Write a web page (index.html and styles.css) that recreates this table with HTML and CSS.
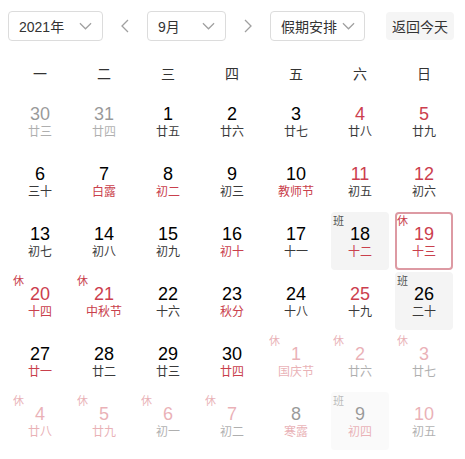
FILE: index.html
```html
<!DOCTYPE html>
<html lang="zh">
<head>
<meta charset="utf-8">
<link rel="stylesheet" href="styles.css">
</head>
<body>
<div class="cal">
  <div class="toolbar">
    <div class="select sel-year"><span>2021年</span><svg class="chev" viewBox="0 0 14 8" width="13" height="8"><path d="M1 1l6 6 6-6" fill="none" stroke="#a0a0a0" stroke-width="1.3"/></svg></div>
    <div class="arrow"><svg viewBox="0 0 8 14" width="8" height="14"><path d="M7 1L1 7l6 6" fill="none" stroke="#a0a0a0" stroke-width="1.3"/></svg></div>
    <div class="select sel-month"><span>9月</span><svg class="chev" viewBox="0 0 14 8" width="13" height="8"><path d="M1 1l6 6 6-6" fill="none" stroke="#a0a0a0" stroke-width="1.3"/></svg></div>
    <div class="arrow"><svg viewBox="0 0 8 14" width="8" height="14"><path d="M1 1l6 6-6 6" fill="none" stroke="#a0a0a0" stroke-width="1.3"/></svg></div>
    <div class="select sel-hol"><span>假期安排</span><svg class="chev" viewBox="0 0 14 8" width="13" height="8"><path d="M1 1l6 6 6-6" fill="none" stroke="#a0a0a0" stroke-width="1.3"/></svg></div>
    <div class="today-btn">返回今天</div>
  </div>
  <div class="weekdays">
    <div>一</div><div>二</div><div>三</div><div>四</div><div>五</div><div>六</div><div>日</div>
  </div>
  <div class="grid">
    <div class="cell other"><div class="num">30</div><div class="lunar">廿三</div></div>
    <div class="cell other"><div class="num">31</div><div class="lunar">廿四</div></div>
    <div class="cell"><div class="num">1</div><div class="lunar">廿五</div></div>
    <div class="cell"><div class="num">2</div><div class="lunar">廿六</div></div>
    <div class="cell"><div class="num">3</div><div class="lunar">廿七</div></div>
    <div class="cell"><div class="num red">4</div><div class="lunar">廿八</div></div>
    <div class="cell"><div class="num red">5</div><div class="lunar">廿九</div></div>

    <div class="cell"><div class="num">6</div><div class="lunar">三十</div></div>
    <div class="cell"><div class="num">7</div><div class="lunar red">白露</div></div>
    <div class="cell"><div class="num">8</div><div class="lunar red">初二</div></div>
    <div class="cell"><div class="num">9</div><div class="lunar">初三</div></div>
    <div class="cell"><div class="num">10</div><div class="lunar red">教师节</div></div>
    <div class="cell"><div class="num red">11</div><div class="lunar">初五</div></div>
    <div class="cell"><div class="num red">12</div><div class="lunar">初六</div></div>

    <div class="cell"><div class="num">13</div><div class="lunar">初七</div></div>
    <div class="cell"><div class="num">14</div><div class="lunar">初八</div></div>
    <div class="cell"><div class="num">15</div><div class="lunar">初九</div></div>
    <div class="cell"><div class="num">16</div><div class="lunar red">初十</div></div>
    <div class="cell"><div class="num">17</div><div class="lunar">十一</div></div>
    <div class="cell work"><span class="tag">班</span><div class="num">18</div><div class="lunar red">十二</div></div>
    <div class="cell selected"><span class="tag rest">休</span><div class="num red">19</div><div class="lunar red">十三</div></div>

    <div class="cell"><span class="tag rest">休</span><div class="num red">20</div><div class="lunar red">十四</div></div>
    <div class="cell"><span class="tag rest">休</span><div class="num red">21</div><div class="lunar red">中秋节</div></div>
    <div class="cell"><div class="num">22</div><div class="lunar">十六</div></div>
    <div class="cell"><div class="num">23</div><div class="lunar red">秋分</div></div>
    <div class="cell"><div class="num">24</div><div class="lunar">十八</div></div>
    <div class="cell"><div class="num red">25</div><div class="lunar">十九</div></div>
    <div class="cell work"><span class="tag">班</span><div class="num">26</div><div class="lunar">二十</div></div>

    <div class="cell"><div class="num">27</div><div class="lunar red">廿一</div></div>
    <div class="cell"><div class="num">28</div><div class="lunar">廿二</div></div>
    <div class="cell"><div class="num">29</div><div class="lunar">廿三</div></div>
    <div class="cell"><div class="num">30</div><div class="lunar red">廿四</div></div>
    <div class="cell other"><span class="tag rest">休</span><div class="num red">1</div><div class="lunar red">国庆节</div></div>
    <div class="cell other"><span class="tag rest">休</span><div class="num red">2</div><div class="lunar">廿六</div></div>
    <div class="cell other"><span class="tag rest">休</span><div class="num red">3</div><div class="lunar">廿七</div></div>

    <div class="cell other"><span class="tag rest">休</span><div class="num red">4</div><div class="lunar red">廿八</div></div>
    <div class="cell other"><span class="tag rest">休</span><div class="num red">5</div><div class="lunar red">廿九</div></div>
    <div class="cell other"><span class="tag rest">休</span><div class="num red">6</div><div class="lunar">初一</div></div>
    <div class="cell other"><span class="tag rest">休</span><div class="num red">7</div><div class="lunar">初二</div></div>
    <div class="cell other"><div class="num">8</div><div class="lunar red">寒露</div></div>
    <div class="cell other work"><span class="tag">班</span><div class="num">9</div><div class="lunar red">初四</div></div>
    <div class="cell other"><div class="num red">10</div><div class="lunar">初五</div></div>
  </div>
</div>
</body>
</html>
```
FILE: styles.css
```css
* { box-sizing: border-box; }
html, body { margin: 0; padding: 0; background: #fff; }
body {
  font-family: "Liberation Sans", "Noto Sans CJK SC", sans-serif;
  color: #333;
}
.cal { padding: 11px 8px 0 8px; width: 465px; }
.toolbar {
  display: flex;
  align-items: center;
  height: 30px;
}
.select {
  height: 30px;
  border: 1px solid #dcdcdc;
  border-radius: 4px;
  display: flex;
  align-items: center;
  justify-content: space-between;
  padding: 0 10px 0 10px;
  font-size: 14px;
  color: #333;
}
.sel-year { width: 95px; }
.sel-month { width: 79px; }
.sel-hol { width: 95px; padding-right: 9px; }
.chev { display: block; }
.arrow {
  width: 44px;
  display: flex;
  justify-content: center;
  align-items: center;
}
.today-btn {
  margin-left: 21px;
  width: 68px;
  height: 28px;
  background: #f5f5f5;
  border-radius: 4px;
  font-size: 14px;
  color: #333;
  display: flex;
  align-items: center;
  justify-content: center;
}
.weekdays {
  display: grid;
  grid-template-columns: repeat(7, 64px);
  height: 50px;
  align-items: center;
  padding-top: 14px;
  font-size: 14px;
  color: #333;
  text-align: center;
}
.grid {
  display: grid;
  grid-template-columns: repeat(7, 64px);
  grid-auto-rows: 60px;
}
.cell {
  position: relative;
  margin: 1px 3px;
  border-radius: 4px;
  text-align: center;
  padding-top: 12px;
}
.num {
  font-size: 18px;
  line-height: 20px;
  color: #000;
}
.lunar {
  font-size: 12px;
  line-height: 16px;
  color: #3a3a3a;
}
.red { color: #c9404c; }
.lunar.red { color: #c9404c; }
.num.red { color: #cc3e4e; }
.other { opacity: 0.4; }
.work { background: #f4f4f4; }
.selected { border: 2px solid #dd9aa3; padding-top: 10px; }
.tag {
  position: absolute;
  left: 2px;
  top: 2px;
  font-size: 11px;
  line-height: 14px;
  color: #555;
}
.tag.rest { color: #c9404c; }
.selected .tag { left: 0; top: 0; }
```
